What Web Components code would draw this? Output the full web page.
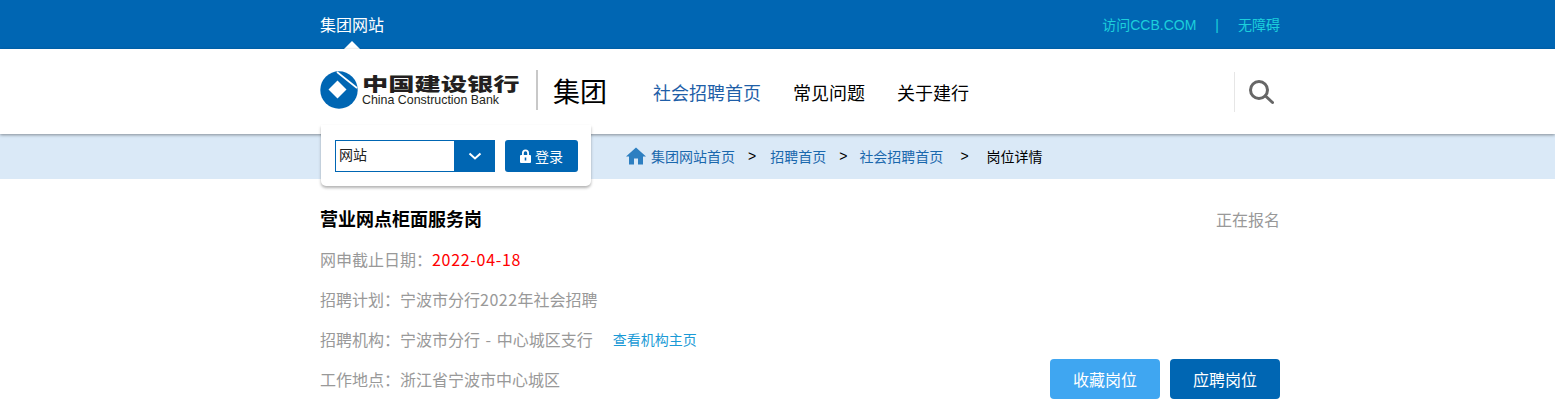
<!DOCTYPE html>
<html lang="zh">
<head>
<meta charset="utf-8">
<title>岗位详情</title>
<style>
	html, body { margin: 0; padding: 0; background: #fff; height: 416px; overflow: hidden; }
	body { font-family: "Noto Sans CJK SC", "Liberation Sans", sans-serif; }
</style>
</head>
<body>
<ccb-topbar></ccb-topbar>
<ccb-header></ccb-header>
<ccb-crumbs></ccb-crumbs>
<ccb-job></ccb-job>
<script>
const FONT = `"Liberation Sans", "Noto Sans CJK SC", sans-serif`;
const CJK = `"Noto Sans CJK SC", "Liberation Sans", sans-serif`;

class CcbTopbar extends HTMLElement {
	constructor() {
		super();
		this.attachShadow({ mode: "open" }).innerHTML = `
      <style>
        :host { display: block; background: #0066b3; height: 49px; font-family: ${FONT}; }
        .wrap { width: 960px; height: 49px; margin-left: 320px; display: flex; align-items: center; justify-content: space-between; position: relative; }
        .site { color: #fff; font-size: 16px; margin-top: -1px; }
        .arrow { position: absolute; left: 24px; bottom: 0; width: 0; height: 0; border: 8px solid transparent; border-top: 0; border-bottom-color: #fff; }
        .links { display: flex; align-items: center; color: #1ccfdc; font-size: 14px; margin-top: -1px; }
        .sep { margin: 0 19px; position: relative; top: 1px; }
      </style>
      <div class="wrap">
        <span class="site">集团网站</span><i class="arrow"></i>
        <div class="links"><span>访问CCB.COM</span><span class="sep">|</span><span>无障碍</span></div>
      </div>`;
	}
}
customElements.define("ccb-topbar", CcbTopbar);

class CcbHeader extends HTMLElement {
	constructor() {
		super();
		this.attachShadow({ mode: "open" }).innerHTML = `
      <style>
        :host { display: block; position: relative; z-index: 2; height: 85px; background: #fff; box-shadow: 0 1px 3px rgba(0,0,0,.4); font-family: ${FONT}; }
        .wrap { width: 960px; height: 85px; margin-left: 320px; display: flex; align-items: center; }
        .logo { display: flex; align-items: center; width: 200px; height: 40px; margin-bottom: 4px; }
        .logo svg { flex: none; display: block; }
        .names { margin-left: 4px; display: flex; flex-direction: column; }
        .cn { font-family: "Noto Sans CJK SC", sans-serif; font-weight: 900; font-size: 18.500px; line-height: 20px; color: #231f20; white-space: nowrap; display: block; transform: scale(1.420, 1); transform-origin: 0 50%; }
        .en { font-size: 12.400px; line-height: 12px; color: #231f20; white-space: nowrap; margin-top: 1px; }
        .bar { width: 2px; height: 40px; background: #c8c8c8; margin: 0 0 4px 16px; }
        .group { font-size: 27px; color: #000; margin: 0 0 3px 15px; width: 54px; white-space: nowrap; }
        nav { display: flex; gap: 32px; margin-left: 46px; font-size: 18px; color: #000; }
        nav .on { color: #1f5fa8; }
        .search { margin-left: auto; width: 45px; height: 40px; border-left: 1px solid #e6e6e6; display: flex; align-items: center; justify-content: center; }
        .search svg { margin-left: 4px; }
      </style>
      <div class="wrap">
        <div class="logo">
          <svg width="38" height="38" viewBox="0 0 38 38">
            <circle cx="19" cy="19" r="18.700" fill="#0066b3"/>
            <path fill="#fff" d="M17.500 9.500 L26.500 18.500 L17.500 27.500 L8.500 18.500 Z"/>
            <path fill="none" stroke="#fff" stroke-width="1.700" d="M17 1 L37 17"/>
          </svg>
          <div class="names">
            <span class="cn">中国建设银行</span>
            <span class="en">China Construction Bank</span>
          </div>
        </div>
        <i class="bar"></i>
        <span class="group">集团</span>
        <nav><span class="on">社会招聘首页</span><span>常见问题</span><span>关于建行</span></nav>
        <div class="search">
          <svg width="28" height="28" viewBox="0 0 28 28" fill="none" stroke="#666" stroke-width="3">
            <circle cx="13" cy="12" r="8.500"/><path d="M19.500 18 L26.500 24.500" stroke-linecap="round"/>
          </svg>
        </div>
      </div>`;
	}
}
customElements.define("ccb-header", CcbHeader);

class CcbCrumbs extends HTMLElement {
	constructor() {
		super();
		this.attachShadow({ mode: "open" }).innerHTML = `
      <style>
        :host { display: block; background: #dae9f7; height: 45px; font-family: ${FONT}; }
        .wrap { width: 960px; height: 45px; margin-left: 320px; position: relative; display: flex; align-items: center; }
        .login { position: absolute; z-index: 3; left: 1px; top: -9px; width: 270px; height: 61px; box-sizing: border-box; background: #fff; border-radius: 0 0 5px 5px; box-shadow: 0 2px 3px rgba(0,0,0,.3); padding: 15px 14px 0; display: flex; align-items: flex-start; }
        .select { flex: none; display: flex; height: 32px; width: 160px; }
        .select .val { flex: none; width: 120px; box-sizing: border-box; border: 1px solid #0066b3; padding-left: 3px; font-size: 14px; line-height: 29px; color: #222; }
        .select .btn { flex: none; width: 40px; background: #0066b3; display: flex; align-items: center; justify-content: center; }
        .go { flex: none; margin-left: 10px; width: 73px; height: 32px; border-radius: 3px; background: #0066b3; color: #fff; font-size: 14px; display: flex; align-items: center; justify-content: center; gap: 4px; }
        .path { margin: -1px 0 0 306px; display: flex; align-items: center; font-size: 14px; color: #1a68ad; white-space: nowrap; }
        .path svg { margin-right: 5px; }
        .gt { color: #000; }
        .cur { color: #000; }
      </style>
      <div class="wrap">
        <div class="login">
          <div class="select">
            <span class="val">网站</span>
            <span class="btn"><svg width="14" height="9" viewBox="0 0 14 9" fill="none" stroke="#fff" stroke-width="2"><path d="M1.500 1.500 L7 6.500 L12.500 1.500"/></svg></span>
          </div>
          <div class="go">
            <svg width="11" height="14" viewBox="0 0 11 14"><path fill="#fff" fill-rule="evenodd" d="M2 6 V4 a3.500 3.500 0 0 1 7 0 V6 h1 a1 1 0 0 1 1 1 V13 a1 1 0 0 1 -1 1 H1 a1 1 0 0 1 -1 -1 V7 a1 1 0 0 1 1 -1 Z M3.800 6 H7.200 V4 a1.700 1.700 0 0 0 -3.400 0 Z M4.700 8.500 V11.500 H6.300 V8.500 Z"/></svg>
            <span>登录</span>
          </div>
        </div>
        <div class="path">
          <svg width="20" height="18" viewBox="0 0 20 18"><path fill="#2d7fc1" d="M10 0.500 L20 9.500 L17 9.500 L17 17.500 L12 17.500 L12 11.500 L8 11.500 L8 17.500 L3 17.500 L3 9.500 L0 9.500 Z"/></svg>
          <span>集团网站首页</span>
          <span class="gt" style="margin:0 14px 0 13px">&gt;</span>
          <span>招聘首页</span>
          <span class="gt" style="margin:0 12px 0 13px">&gt;</span>
          <span>社会招聘首页</span>
          <span class="gt" style="margin:0 18px 0 17px">&gt;</span>
          <span class="cur">岗位详情</span>
        </div>
      </div>`;
	}
}
customElements.define("ccb-crumbs", CcbCrumbs);

class CcbJob extends HTMLElement {
	constructor() {
		super();
		this.attachShadow({ mode: "open" }).innerHTML = `
      <style>
        :host { display: block; font-family: ${CJK}; }
        .wrap { width: 960px; margin-left: 320px; padding-top: 28px; position: relative; color: #999; font-size: 16px; }
        .head { display: flex; justify-content: space-between; align-items: center; height: 22px; }
        .head span { margin-top: 2px; }
        h1 { margin: 0; font-size: 18px; line-height: 22px; font-weight: 700; color: #000; }
        .row { height: 40px; display: flex; align-items: center; white-space: nowrap; }
        .rows { margin-top: 10px; }
        .red { color: #f00; letter-spacing: .7px; }
        .num { letter-spacing: .5px; }
        .dash { word-spacing: 2px; }
        .link { color: #1a9ad6; font-size: 14px; margin-left: 20px; }
        .acts { position: absolute; right: 0; top: 180px; display: flex; gap: 10px; }
        .acts span { width: 110px; height: 40px; border-radius: 4px; color: #fff; font-size: 16px; display: flex; align-items: center; justify-content: center; }
        .fav { background: #3fa6f1; }
        .app { background: #0066b3; }
      </style>
      <div class="wrap">
        <div class="head"><h1>营业网点柜面服务岗</h1><span>正在报名</span></div>
        <div class="rows">
          <div class="row"><span>网申截止日期：</span><span class="red">2022-04-18</span></div>
          <div class="row"><span>招聘计划：宁波市分行<span class="num">2022</span>年社会招聘</span></div>
          <div class="row"><span class="dash">招聘机构：宁波市分行 - 中心城区支行</span><span class="link">查看机构主页</span></div>
          <div class="row"><span>工作地点：浙江省宁波市中心城区</span></div>
        </div>
        <div class="acts"><span class="fav">收藏岗位</span><span class="app">应聘岗位</span></div>
      </div>`;
	}
}
customElements.define("ccb-job", CcbJob);
</script>
</body>
</html>
